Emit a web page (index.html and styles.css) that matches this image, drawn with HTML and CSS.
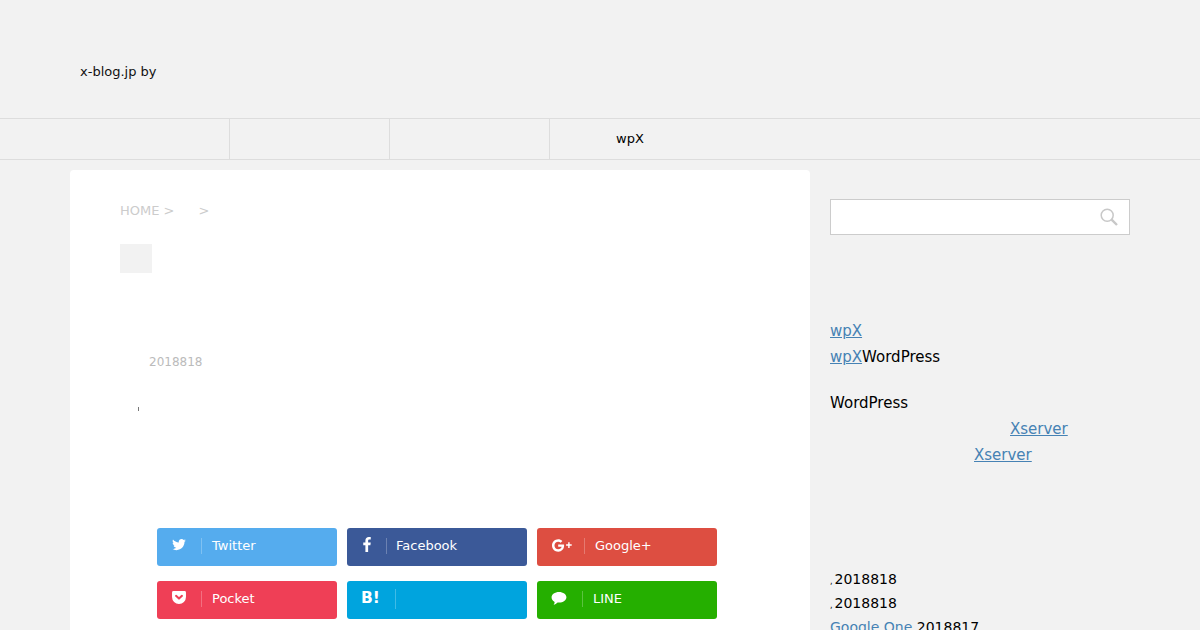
FILE: index.html
```html
<!DOCTYPE html>
<html lang="ja">
<head>
<meta charset="utf-8">
<title>x-blog.jp</title>
<link rel="stylesheet" href="styles.css">
</head>
<body>
<header class="site-header"><p class="site-desc">x-blog.jp by</p></header>
<nav class="global-nav">
  <ul class="nav-list">
    <li class="nav-item"></li>
    <li class="nav-item"></li>
    <li class="nav-item"></li>
    <li class="nav-item nav-last"><a class="nav-link">wpX</a></li>
  </ul>
</nav>
<div class="wrap">
  <main class="card">
    <div class="breadcrumb"><span>HOME &gt;</span><span class="crumb-sep">&gt;</span></div>
    <div class="tag-box"></div>
    <div class="date">2018818</div>
    <div class="tick-row"><span class="tick"></span></div>
    <div class="share">
      <a class="btn twitter"><span class="ico ico-w1"><svg class="up1" viewBox="0 0 16 14" width="14" height="12"><path fill="#fff" d="M16 1.700c-.6.300-1.200.400-1.900.500.700-.400 1.200-1 1.400-1.800-.6.400-1.300.600-2 .800C12.900.500 12 0 11 0 9.200 0 7.700 1.500 7.700 3.300c0 .300 0 .500.100.700C5 3.900 2.600 2.600 1 .600.700 1.100.600 1.600.600 2.200c0 1.100.600 2.100 1.500 2.700-.5 0-1-.2-1.500-.4 0 1.600 1.100 2.900 2.600 3.200-.5.100-1 .2-1.500.1.400 1.300 1.600 2.200 3.100 2.300C3.500 11 1.600 11.700 0 11.500 1.500 12.500 3.200 13 5 13c6 0 9.400-5 9.400-9.400v-.4c.7-.4 1.200-1 1.600-1.500z"/></svg></span><span class="label">Twitter</span></a>
      <a class="btn facebook"><span class="ico ico-w2"><svg viewBox="0 0 8 16" width="8" height="15"><path fill="#fff" d="M5.200 16V8.700h2.400l.4-2.800H5.200V4.100c0-.8.200-1.400 1.400-1.400H8V.100C7.700.100 6.900 0 5.900 0 3.800 0 2.300 1.300 2.300 3.700v2.200H0v2.800h2.300V16z"/></svg></span><span class="label label-fb">Facebook</span></a>
      <a class="btn google"><span class="ico ico-w3"><svg viewBox="0 0 21 13" width="20" height="13"><path fill="#fff" d="M6.500 5.500v2.300h3.600C9.900 9.300 8.500 10.500 6.500 10.500 4.300 10.500 2.600 8.700 2.600 6.500S4.300 2.500 6.500 2.500c1 0 1.900.400 2.600 1l1.800-1.800C9.700.700 8.200 0 6.500 0 2.900 0 0 2.900 0 6.500S2.900 13 6.500 13c3.800 0 6.200-2.700 6.200-6.400 0-.4 0-.8-.1-1.100z"/><path fill="#fff" d="M17 3h1.500v2.200H20.700v1.500H18.500v2.300H17V6.700H14.800V5.200H17z"/></svg></span><span class="label">Google+</span></a>
      <a class="btn pocket"><span class="ico ico-w1"><svg class="up1" viewBox="0 0 15 14" width="14" height="13"><path fill="#fff" d="M1.500 0h12A1.500 1.500 0 0 1 15 1.500V6.500A7.500 7.500 0 0 1 0 6.500V1.500A1.500 1.500 0 0 1 1.500 0z"/><path fill="none" stroke="#ef3f56" stroke-width="2.200" stroke-linecap="round" stroke-linejoin="round" d="M4.300 5.200l3.200 3 3.200-3"/></svg></span><span class="label">Pocket</span></a>
      <a class="btn hatena"><span class="ico ico-hatena">B!</span><span class="label"></span></a>
      <a class="btn line"><span class="ico ico-w4"><svg viewBox="0 0 16 14" width="16" height="13"><path fill="#fff" d="M8 0c4.400 0 8 2.500 8 5.700 0 3.200-3.600 5.700-8 5.700-.5 0-1 0-1.500-.1C5.200 12.500 3.700 13.500 2.200 13.800c.7-.9 1.100-2 1.100-3.100C1.300 9.700 0 7.800 0 5.700 0 2.500 3.600 0 8 0z"/></svg></span><span class="label">LINE</span></a>
    </div>
  </main>
  <aside class="sidebar">
    <form class="search"><svg class="search-ico" viewBox="0 0 18 18" width="18" height="18"><circle cx="7.200" cy="7.200" r="6" fill="none" stroke="#c8c8c8" stroke-width="1.500"/><path d="M11.600 11.600L17 17" stroke="#c8c8c8" stroke-width="2.400" fill="none"/></svg></form>
    <div class="intro">
      <p><a class="link">wpX</a></p>
      <p><a class="link">wpX</a>WordPress</p>
      <p class="gap-top">WordPress</p>
      <p class="indent-a"><a class="link">Xserver</a></p>
      <p class="indent-b"><a class="link">Xserver</a></p>
    </div>
    <ul class="recent">
      <li class="recent-item"><span class="comma">,</span>2018818</li>
      <li class="recent-item"><span class="comma">,</span>2018818</li>
      <li class="recent-item"><a class="link">Google One</a> 2018817</li>
    </ul>
  </aside>
</div>
</body>
</html>
```
FILE: styles.css
```css
* { box-sizing: border-box; }
html, body { margin: 0; height: 630px; overflow: hidden; }
body { background: #f2f2f2; color: #000; font-family: "DejaVu Sans", sans-serif; }
p, ul { margin: 0; padding: 0; list-style: none; }

.site-header { height: 118px; padding: 64px 0 0 80px; }
.site-desc { font-size: 13px; line-height: 16px; color: #111; }

.global-nav { height: 42px; border-top: 1px solid #ddd; border-bottom: 1px solid #ddd; padding-left: 70px; }
.nav-list { display: flex; height: 40px; }
.nav-item { width: 160px; border-right: 1px solid #ddd; display: flex; align-items: center; justify-content: center; padding-bottom: 2px; }
.nav-last { border-right: 0; }
.nav-link { font-size: 13px; color: #000; }

.wrap { display: flex; gap: 20px; padding: 10px 0 0 70px; }

.card { width: 740px; height: 470px; background: #fff; border-radius: 4px; padding: 33px 50px 0; }
.breadcrumb { display: flex; font-size: 13px; line-height: 16px; color: #ccc; }
.crumb-sep { margin-left: 24px; }
.tag-box { width: 32px; height: 29px; margin-top: 25px; background: #f2f2f2; }
.date { margin: 81px 0 0 29px; font-size: 12px; line-height: 16px; color: #bbb; }
.tick-row { height: 10px; margin: 37px 0 0 18px; }
.tick { display: block; width: 1px; height: 4px; background: #777; }

.share { display: grid; grid-template-columns: repeat(3, 180px); gap: 15px 10px; margin: 111px 0 0 37px; }
.btn { display: flex; align-items: center; height: 38px; border-radius: 3px; color: #fff; font-size: 13px; padding-bottom: 3px; }
.twitter { background: #55acee; }
.facebook { background: #3b5998; }
.google { background: #dd4e41; }
.pocket { background: #ef3f56; }
.hatena { background: #00a4de; }
.line { background: #25af00; }
.ico { display: flex; align-items: center; justify-content: center; height: 16px; border-right: 1px solid rgba(255,255,255,.25); }
.ico-w1 { width: 45px; padding-right: 1px; }
.ico-w2 { width: 40px; padding: 0 0 3px 0; }
.ico-w3 { width: 48px; padding-left: 2px; }
.ico-w4 { width: 46px; padding-right: 1px; }
.ico-hatena { width: 49px; height: 20px; padding: 0 1px 2px 0; font-weight: bold; font-size: 15.500px; }
.label { margin-left: 10px; }
.label-fb { margin-left: 9px; }
.up1 { margin-top: -2px; }

.sidebar { width: 300px; padding-top: 29px; font-size: 15px; line-height: 26px; }
.search { display: flex; align-items: center; justify-content: flex-end; height: 36px; padding-right: 11px; background: #fff; border: 1px solid #ccc; }
.search-ico { display: block; }
.intro { margin-top: 83px; }
.gap-top { margin-top: 20px; }
.indent-a { padding-left: 180px; }
.indent-b { padding-left: 144px; }
.link { color: #4682b4; text-decoration: underline; }
.recent { margin-top: 99px; font-size: 14px; }
.recent-item { height: 24px; line-height: 24px; }
.comma { font-size: 8px; margin-right: 2px; vertical-align: baseline; line-height: 1; }
```
